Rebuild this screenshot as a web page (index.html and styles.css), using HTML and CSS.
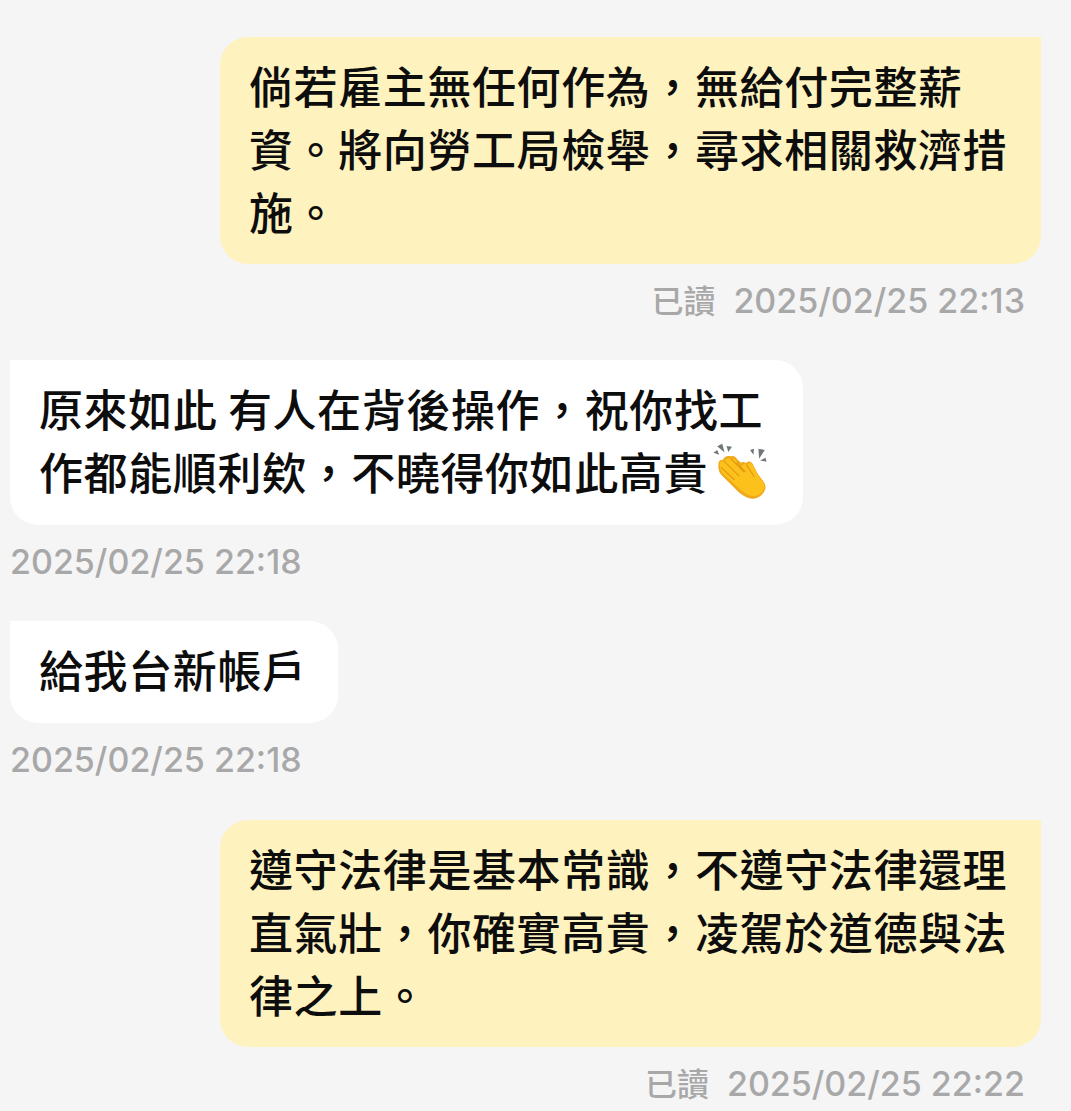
FILE: index.html
```html
<!DOCTYPE html>
<html lang="zh-Hant">
<head>
  <meta charset="UTF-8" />
  <meta name="viewport" content="width=device-width, initial-scale=1.0"/>
  <title>Chat</title>
  <link rel="stylesheet" href="styles.css">
</head>
<body>
  <div class="chat">

    <div class="msg mine">
      <div class="bubble">倘若雇主無任何作為，無給付完整薪<br>資。將向勞工局檢舉，尋求相關救濟措<br>施。</div>
      <div class="meta"><span class="read">已讀</span>2025/02/25 22:13</div>
    </div>

    <div class="msg theirs">
      <div class="bubble">原來如此 有人在背後操作，祝你找工<br>作都能順利欸，不曉得你如此高貴<svg class="emoji" viewBox="68 45 160 167" aria-hidden="true">
          <path fill="#6f777b" d="M69 74l11-8 6 14zM80 55l15-8 7 26zM108 54l16 2-11 16zM178 66l12-4-2 18zM203 62l19 4-17 26zM208 97l16-8 3 12z"/>
          <path fill="#f0a81c" d="M84 108c-2-10 8-14 14-13 1-8 14-14 23-10 9-3 14 2 20 10l10 9c5-5 12-2 15 1 6-8 15-6 19 1l15 29c5 10 22 25 24 38 2 16-14 37-36 38-18 1-31-9-46-21L92 140c-7-8-10-20-8-32z"/>
          <path fill="#fcc21b" d="M88 108c0-8 9-11 14-8 1-9 13-12 20-8 8-3 12 2 17 9l14 13c4-7 12-8 15-3 5-8 14-8 18 0l13 27c5 10 20 22 22 34 1 14-12 30-30 31-16 1-30-9-43-20L97 136c-6-7-10-18-9-28z"/>
          <path fill="none" stroke="#e39a12" stroke-width="3.5" stroke-linecap="round" d="M101 100l44 43M121 92l38 38M92 118l38 36M139 103l24 28M168 111l22 34"/>
        </svg></div>
      <div class="meta">2025/02/25 22:18</div>
    </div>

    <div class="msg theirs">
      <div class="bubble">給我台新帳戶</div>
      <div class="meta">2025/02/25 22:18</div>
    </div>

    <div class="msg mine last">
      <div class="bubble">遵守法律是基本常識，不遵守法律還理<br>直氣壯，你確實高貴，凌駕於道德與法<br>律之上。</div>
      <div class="meta"><span class="read">已讀</span>2025/02/25 22:22</div>
    </div>

  </div>
</body>
</html>
```

FILE: styles.css
```css
* {
  box-sizing: border-box;
  margin: 0;
  padding: 0;
}

html, body {
  height: 100%;
  overflow: hidden;
}

body {
  background: #f5f5f6;
  font-family: "Noto Sans CJK TC", "Noto Sans", sans-serif;
}

.chat {
  display: flex;
  flex-direction: column;
  gap: 39px;
  padding-top: 37px;
}

.msg {
  display: flex;
  flex-direction: column;
  gap: 17px;
}

.mine {
  align-items: flex-end;
  padding-right: 30px;
}

.theirs {
  align-items: flex-start;
  padding-left: 10px;
}

.last {
  margin-top: 1px;
}

.bubble {
  padding: 17px 31px 21px 29px;
  font-size: 44px;
  font-weight: 500;
  line-height: 63px;
  letter-spacing: 0.6px;
  color: #0d0d0d;
  white-space: nowrap;
  border-radius: 28px;
}

.mine .bubble {
  width: 821px;
  background: #fef2bf;
  border-top-right-radius: 0;
}

.theirs .bubble {
  padding-bottom: 22px;
  background: #fff;
  border-top-left-radius: 0;
}

.meta {
  font-family: Inter, "Noto Sans CJK TC", sans-serif;
  font-size: 34px;
  font-weight: 500;
  line-height: 40px;
  color: #a8a8a8;
  white-space: nowrap;
}

.mine .meta {
  padding-right: 16px;
}

.read {
  font-family: "Noto Sans CJK TC", sans-serif;
  font-size: 32px;
  line-height: 1;
  margin-right: 18px;
}

.emoji {
  width: 54px;
  height: 56px;
  margin: 0 5px;
  vertical-align: -9px;
}
```
